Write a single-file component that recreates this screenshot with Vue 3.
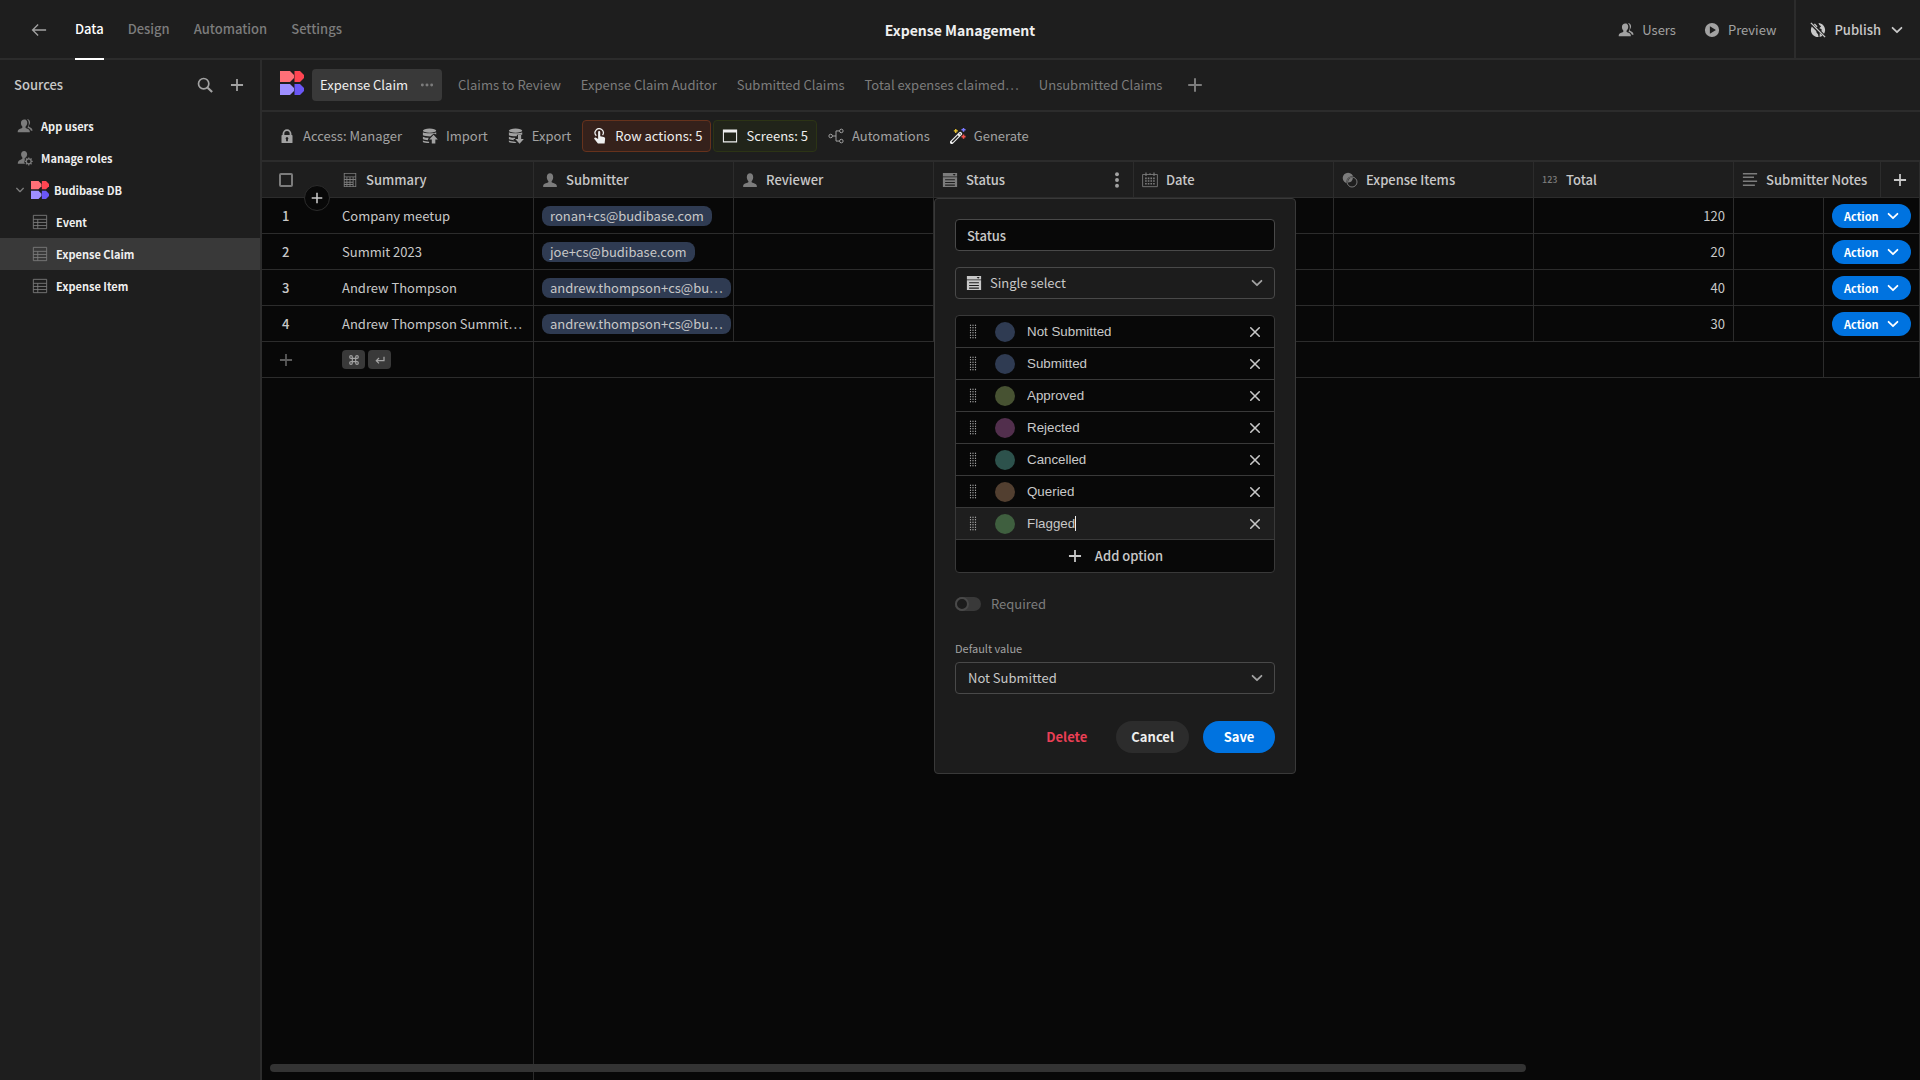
<script setup>
import { ref } from 'vue'

const icons = {
  back: '<path d="M17 9H2M8 2.800 1.800 9 8 15.200" fill="none" stroke="currentColor" stroke-width="1.5"/>',
  users: '<path d="M11.2 3.6C10.7 2 9.5 1.600 8.200 1.600c-2.200 0-3.800 1.500-3.800 4.100 0 1.600.7 3 1.500 4 .3.500.3 1.200-.2 1.500-1.200.7-4.900 1.300-4.900 4.100V16h13.600v-.8c0-2.800-3.400-3.300-4.500-4-.5-.4-.4-1.100-.1-1.600.9-1 1.700-2.300 1.700-4 0-.8-.1-1.400-.3-2z"/><path d="M11 1.100c2.200 0 3.700 1.400 3.700 3.800 0 1.500-.6 2.700-1.300 3.600-.4.500-.3 1.100.2 1.400 1 .7 3.800 1.400 3.800 3.900v.6h-1.700c-.6-1.700-2-2.700-3.900-3.600.8-1.200 1.500-2.900 1.500-5 0-2-.8-3.600-2.300-4.700z"/>',
  roles: '<path d="M9 15.500c-.3-.8-1-1.400-.9-2.300l.9-2.200-.6-.8c.2-.9 1-1.700 1.800-2 .7-.9 1.200-1.900 1.200-3.300C11.400 2.500 10 1 8 1S4.600 2.500 4.600 4.900c0 1.500.6 2.700 1.300 3.600.4.500.3 1.200-.2 1.500C4.500 10.800.9 11.500.9 15v.5z"/><circle cx="13.200" cy="12.800" r="2.700" fill="none" stroke="currentColor" stroke-width="1.400"/><path d="M13.200 8.300v1.900m0 5.300v1.900M8.700 12.800h1.900m5.200 0h1.900M10 9.600l1.300 1.300m3.800 3.800 1.300 1.300m0-6.400-1.300 1.300m-3.800 3.800L10 16" stroke="currentColor" stroke-width="1.400"/>',
  user: '<path d="M11.300 11.700c-.6-.3-.7-1.200-.3-1.700 1-1.100 1.600-2.500 1.600-4.200C12.600 3 11.100 1.400 9 1.400S5.400 3 5.400 5.800c0 1.700.7 3.100 1.600 4.200.5.500.3 1.400-.3 1.700-1.500.8-5.400 1.200-5.400 4V17h15.400v-1.300c0-2.700-3.900-3.200-5.400-4z"/>',
  search: '<circle cx="7.500" cy="7.500" r="5.800" fill="none" stroke="currentColor" stroke-width="1.900"/><path d="m12 12 5 5" stroke="currentColor" stroke-width="2.400"/>',
  plus: '<path d="M9 2.200v13.600M2.200 9h13.600" stroke="currentColor" stroke-width="2"/>',
  chevron: '<path d="m4 6.500 5 5 5-5" fill="none" stroke="currentColor" stroke-width="2" stroke-linecap="round" stroke-linejoin="round"/>',
  cross: '<path d="m3.500 3.500 11 11m0-11-11 11" stroke="currentColor" stroke-width="2" stroke-linecap="round"/>',
  table: '<path d="M1.500 1.500h15v15h-15zM1.500 6h15M1.500 9.500h15M1.500 13h15M6.500 6v10.500" fill="none" stroke="currentColor" stroke-width="1"/>',
  play: '<path fill-rule="evenodd" d="M9 1a8 8 0 1 1 0 16A8 8 0 0 1 9 1zm-2.400 3.800v8.400L13.400 9z"/>',
  globe: '<path d="M9.500 1c4.300.2 7.500 3.600 7.500 8 0 1.600-.5 3.100-1.300 4.300L12.800 10c.7-.9.300-2-.8-2.300l-1.500-.8 2-2-2-1.600zM5.500 1.800l3 3-1 1L4.300 2.600zM2 5l5 5 .5 2.200 1.500 1.600.7 3.100C5 17.300 1 13.600 1 9c0-1.500.4-2.900 1-4zm9 7.500 3 3c-1 .8-2 1.200-3.200 1.400z"/><path d="m1 1 16 16" stroke="currentColor" stroke-width="1.500"/>',
  lock: '<path fill-rule="evenodd" d="M14.500 8H14V6.500a5 5 0 0 0-10 0V8h-.5a.7.7 0 0 0-.7.700v7.600c0 .4.300.7.700.7h11c.4 0 .7-.3.7-.7V8.700a.7.7 0 0 0-.7-.7zM6 6.500a3 3 0 0 1 6 0V8H6zm4 6.300V15H8v-2.200a1.500 1.500 0 1 1 2 0z"/>',
  import: '<ellipse cx="8.500" cy="3" rx="7.500" ry="2.300"/><path d="M1 4.800c2 1.600 13 1.600 15 0v2.500l-2.700-1-4 3.200C6 9.500 2.500 9 1 8.200zM1 9.800c2 1 4.500 1.300 6.500 1.300l-1 2.700C4.500 13.700 2 13.200 1 12.500zM1 14.200c1.500.8 4 1.200 7 1.200V17c-3.500 0-6-.5-7-1.300zM13 7.500l4.800 5.300H15V17.500h-4v-4.700H8.200z"/>',
  export: '<ellipse cx="8.500" cy="3" rx="7.500" ry="2.300"/><path d="M1 4.800c2 1.600 13 1.600 15 0v2.700H10v1.800C6 9.500 2.500 9 1 8.200zM1 9.800c2 1 4.500 1.300 7 1.300v1.300H6l1 1.500C4.500 13.700 2 13.200 1 12.500zM1 14.200c1.500.8 4 1.200 7 1.200l1.600 1.600c-4 0-7.600-.5-8.600-1.300zM11.200 8h3.600v4.500h3L13 17.800l-4.800-5.300h3z"/>',
  touch: '<path d="M6 8.700A4.600 4.600 0 1 1 13 8" fill="none" stroke="currentColor" stroke-width="1.400"/><path d="M8 4.700c0-1.600 2.400-1.600 2.400 0v4.500l4 .9c1 .3 1.600 1 1.500 2l-.6 5.400H7.800l-4-5.200c-.8-1.200.7-2.300 1.800-1.400L8 12.500z"/>',
  screen: '<path fill-rule="evenodd" d="M1 1.800h16v14.400H1zM2.200 5v10h13.600V5z"/>',
  flow: '<circle cx="3" cy="9" r="2" fill="none" stroke="currentColor" stroke-width="1.100"/><circle cx="15" cy="3.300" r="2" fill="none" stroke="currentColor" stroke-width="1.100"/><circle cx="15" cy="14.700" r="2" fill="none" stroke="currentColor" stroke-width="1.100"/><path d="M5 9h4m4-5.700H9v11.400h4" fill="none" stroke="currentColor" stroke-width="1.100"/>',
  wand: '<path d="m2 16 9.500-9.500" stroke="#efefef" stroke-width="4.200" stroke-linecap="round"/><path d="m2.300 15.700 7-7M11 7l.7-.7" stroke="#1e1e1e" stroke-width="1.600"/><path d="M6.500 1v4.500M4.300 3.200h4.500" stroke="#f0c930" stroke-width="1.500"/><path d="M15.200-.3v4.600M12.900 2h4.600" stroke="#7a78ff" stroke-width="1.700"/><path d="M15.200 7.400V12M12.900 9.700h4.600" stroke="#f4514a" stroke-width="1.700"/>',
  calc: '<path fill-rule="evenodd" d="M2 1h14v16H2zM3 2v3h12V2zm0 4v2h2V6zm3 0v2h2.500V6zm3.500 0v2H12V6zM13 6v2h2V6zM3 9v2h2V9zm3 0v2h2.500V9zm3.500 0v2H12V9zM13 9v7h2V9zM3 12v1.500h2V12zm3 0v1.500h2.500V12zm3.500 0v1.500H12V12zM3 14.500V16h2v-1.500zm3 0V16h2.500v-1.500zm3.500 0V16H12v-1.500z"/>',
  select: '<path fill-rule="evenodd" d="M1 1h16v4H1zm11 1.200 1.700 1.900 1.700-1.900zM1 6h16v11H1zm2.500 2.200v1.200h11V8.200zm0 3v1.200h11v-1.200zm0 3v1.200h11v-1.200z"/>',
  calendar: '<path d="M.7 2.800h16.600v13.700H.7z" fill="none" stroke="currentColor" stroke-width="1"/><path d="M4.500.500v4M13.500.500v4M9 1.500v2" stroke="currentColor" stroke-width="1.300"/><path d="M3.500 7.200h11.500M3.500 10.200h11.500M3.500 13.200h11.500" stroke="currentColor" stroke-width="1.800" stroke-dasharray="1.800 1.200"/>',
  link: '<circle cx="6.800" cy="6.800" r="6"/><circle cx="11.300" cy="11.300" r="6.400" fill="#1e1e1e"/><circle cx="11.300" cy="11.300" r="5.600" fill="none" stroke="currentColor" stroke-width="1.100"/><path d="M6.800 11.800c-.3-3 2-5.400 5.300-5.300.2 3-2 5.500-5.300 5.300z"/>',
  text: '<path d="M1 2h16M1 6h12.500M1 10.500h16M1 15h13.500" stroke="currentColor" stroke-width="1.600"/>',
  enter: '<path d="M15 4v6H4M7.500 6 3.500 10l4 4" fill="none" stroke="currentColor" stroke-width="1.900"/>',
  command: '<path d="M6.500 6.500h5v5h-5zM6.500 6.500h-2a2 2 0 1 1 2-2zM11.500 6.500v-2a2 2 0 1 1 2 2zM11.500 11.500h2a2 2 0 1 1-2 2zM6.500 11.500v2a2 2 0 1 1-2-2z" fill="none" stroke="currentColor" stroke-width="1.700"/>',
  grip: '<path d="M6.200.800v17M9 .8v17M11.800.800v17" stroke="currentColor" stroke-width="1.300" stroke-dasharray="1.300 1.500"/>',
  dots: '<circle cx="3" cy="9" r="1.900"/><circle cx="9" cy="9" r="1.900"/><circle cx="15" cy="9" r="1.900"/>',
  more: '<circle cx="9" cy="2.500" r="2.200"/><circle cx="9" cy="9" r="2.200"/><circle cx="9" cy="15.500" r="2.200"/>',
}

const tabs = ['Data', 'Design', 'Automation', 'Settings']
const views = ['Claims to Review', 'Expense Claim Auditor', 'Submitted Claims', 'Total expenses claimed…', 'Unsubmitted Claims']
const tools = [
  { icon: 'lock', label: 'Access: Manager' },
  { icon: 'import', label: 'Import' },
  { icon: 'export', label: 'Export' },
  { icon: 'touch', label: 'Row actions: 5', tone: 'orange' },
  { icon: 'screen', label: 'Screens: 5', tone: 'green' },
  { icon: 'flow', label: 'Automations' },
  { icon: 'wand', label: 'Generate' },
]
const tables = ['Event', 'Expense Claim', 'Expense Item']
const rows = [
  { summary: 'Company meetup', submitter: 'ronan+cs@budibase.com', total: 120 },
  { summary: 'Summit 2023', submitter: 'joe+cs@budibase.com', total: 20 },
  { summary: 'Andrew Thompson', submitter: 'andrew.thompson+cs@bu…', total: 40 },
  { summary: 'Andrew Thompson Summit…', submitter: 'andrew.thompson+cs@bu…', total: 30 },
]
const fieldName = ref('Status')
const options = ref([
  { name: 'Not Submitted', color: '#2f3b52' },
  { name: 'Submitted', color: '#2f3b52' },
  { name: 'Approved', color: '#475232' },
  { name: 'Rejected', color: '#522f4d' },
  { name: 'Cancelled', color: '#2d524c' },
  { name: 'Queried', color: '#523f30' },
  { name: 'Flagged', color: '#3f5f3f', active: true },
])
</script>

<template>
  <div class="app">
    <header class="topbar">
      <nav class="nav">
        <button class="plain back" aria-label="Back"><svg class="icon" viewBox="0 0 18 18" v-html="icons.back" /></button>
        <a v-for="(t, i) in tabs" :key="t" href="#" class="nav-link" :class="{ current: i === 0 }">{{ t }}</a>
      </nav>
      <h1>Expense Management</h1>
      <div class="top-actions">
        <button class="plain top-btn"><svg class="icon" viewBox="0 0 18 18" v-html="icons.users" />Users</button>
        <button class="plain top-btn"><svg class="icon" viewBox="0 0 18 18" v-html="icons.play" />Preview</button>
        <button class="plain top-btn publish"><svg class="icon" viewBox="0 0 18 18" v-html="icons.globe" />Publish<svg class="icon" viewBox="0 0 18 18" v-html="icons.chevron" /></button>
      </div>
    </header>

    <div class="body">
      <aside class="sidebar">
        <div class="side-head">
          <span>Sources</span>
          <button class="plain" aria-label="Search"><svg class="icon" viewBox="0 0 18 18" v-html="icons.search" /></button>
          <button class="plain" aria-label="Add source"><svg class="icon" viewBox="0 0 18 18" v-html="icons.plus" /></button>
        </div>
        <a href="#" class="side-item"><svg class="icon" viewBox="0 0 18 18" v-html="icons.users" />App users</a>
        <a href="#" class="side-item"><svg class="icon" viewBox="0 0 18 18" v-html="icons.roles" />Manage roles</a>
        <a href="#" class="side-item db">
          <svg class="icon i12" viewBox="0 0 18 18" v-html="icons.chevron" />
          <svg class="logo small" viewBox="0 0 24 24">
            <path fill="#ff7078" d="M0 0h10l4 4v3l-4 4H0z" /><path fill="#ff4552" d="M14.500 0H20l4 4v3l-4 4h-5.500z" />
            <path fill="#9e8fff" d="M0 13h10l4 4v3l-4 4H0z" /><path fill="#6a57f6" d="M14.500 13H20l4 4v3l-4 4h-5.500z" />
          </svg>Budibase DB</a>
        <a v-for="(t, i) in tables" :key="t" href="#" class="side-item sub" :class="{ current: i === 1 }"><svg class="icon" viewBox="0 0 18 18" v-html="icons.table" />{{ t }}</a>
      </aside>

      <main class="main">
        <nav class="views">
          <svg class="logo" viewBox="0 0 24 24">
            <path fill="#ff7078" d="M0 0h10l4 4v3l-4 4H0z" /><path fill="#ff4552" d="M14.500 0H20l4 4v3l-4 4h-5.500z" />
            <path fill="#9e8fff" d="M0 13h10l4 4v3l-4 4H0z" /><path fill="#6a57f6" d="M14.500 13H20l4 4v3l-4 4h-5.500z" />
          </svg>
          <a href="#" class="view current">Expense Claim<svg class="icon" viewBox="0 0 18 18" v-html="icons.dots" /></a>
          <a v-for="v in views" :key="v" href="#" class="view">{{ v }}</a>
          <button class="plain add-view" aria-label="Add view"><svg class="icon i18" viewBox="0 0 18 18" v-html="icons.plus" /></button>
        </nav>
        <div class="toolbar">
          <button v-for="t in tools" :key="t.label" class="tool" :class="t.tone"><svg class="icon" viewBox="0 0 18 18" v-html="icons[t.icon]" />{{ t.label }}</button>
        </div>

        <section class="grid">
          <table>
            <colgroup>
              <col class="c-gutter"><col v-for="n in 7" :key="n" class="c-data"><col><col class="c-action"><col class="c-add">
            </colgroup>
            <thead>
              <tr>
                <th class="gutter">
                  <input class="check" type="checkbox" aria-label="Select all rows">
                  <button class="insert" aria-label="Insert row"><svg class="icon" viewBox="0 0 18 18" v-html="icons.plus" /></button>
                </th>
                <th><div class="head"><svg class="icon" viewBox="0 0 18 18" v-html="icons.calc" />Summary</div></th>
                <th><div class="head"><svg class="icon" viewBox="0 0 18 18" v-html="icons.user" />Submitter</div></th>
                <th><div class="head"><svg class="icon" viewBox="0 0 18 18" v-html="icons.user" />Reviewer</div></th>
                <th class="anchor">
                  <div class="head"><svg class="icon" viewBox="0 0 18 18" v-html="icons.select" />Status
                    <button class="plain more" aria-label="Column menu"><svg class="icon" viewBox="0 0 18 18" v-html="icons.more" /></button>
                  </div>
                  <form class="popover" @submit.prevent>
                    <input v-model="fieldName" class="field name" aria-label="Column name">
                    <div class="picker">
                      <svg class="icon lead" viewBox="0 0 18 18" v-html="icons.select" />
                      <select class="field with-icon" aria-label="Column type"><option>Single select</option></select>
                      <svg class="icon caret" viewBox="0 0 18 18" v-html="icons.chevron" />
                    </div>
                    <div class="options">
                      <div v-for="(o, i) in options" :key="i" class="option" :class="{ active: o.active }">
                        <svg class="icon grip" viewBox="0 0 18 18" v-html="icons.grip" />
                        <span class="swatch" :style="{ background: o.color }" />
                        <div class="option-name"><input v-model="o.name" aria-label="Option name"><span v-if="o.active" class="cursor" /></div>
                        <button type="button" class="plain" aria-label="Remove option"><svg class="icon i14" viewBox="0 0 18 18" v-html="icons.cross" /></button>
                      </div>
                      <button type="button" class="plain add-option"><svg class="icon" viewBox="0 0 18 18" v-html="icons.plus" />Add option</button>
                    </div>
                    <label class="switch"><input type="checkbox">Required</label>
                    <label class="label" for="default-value">Default value</label>
                    <div class="picker">
                      <select id="default-value" class="field"><option>Not Submitted</option></select>
                      <svg class="icon caret" viewBox="0 0 18 18" v-html="icons.chevron" />
                    </div>
                    <div class="buttons">
                      <button type="button" class="btn delete">Delete</button>
                      <button type="button" class="btn cancel">Cancel</button>
                      <button class="btn save">Save</button>
                    </div>
                  </form>
                </th>
                <th><div class="head"><svg class="icon" viewBox="0 0 18 18" v-html="icons.calendar" />Date</div></th>
                <th><div class="head"><svg class="icon" viewBox="0 0 18 18" v-html="icons.link" />Expense Items</div></th>
                <th><div class="head"><span class="num-icon">123</span>Total</div></th>
                <th colspan="2"><div class="head"><svg class="icon" viewBox="0 0 18 18" v-html="icons.text" />Submitter Notes</div></th>
                <th class="add-col"><button class="plain" aria-label="Add column"><svg class="icon" viewBox="0 0 18 18" v-html="icons.plus" /></button></th>
              </tr>
            </thead>
            <tbody>
              <tr v-for="(r, i) in rows" :key="i">
                <td class="gutter">{{ i + 1 }}</td>
                <td>{{ r.summary }}</td>
                <td><span class="pill">{{ r.submitter }}</span></td>
                <td /><td /><td /><td />
                <td class="number">{{ r.total }}</td>
                <td />
                <td colspan="2"><button class="action">Action<svg class="icon" viewBox="0 0 18 18" v-html="icons.chevron" /></button></td>
              </tr>
              <tr class="new-row">
                <td class="gutter"><button class="plain" aria-label="New row"><svg class="icon" viewBox="0 0 18 18" v-html="icons.plus" /></button></td>
                <td>
                  <div class="keys">
                    <kbd><svg class="icon i12" viewBox="0 0 18 18" v-html="icons.command" /></kbd>
                    <kbd><svg class="icon i12" viewBox="0 0 18 18" v-html="icons.enter" /></kbd>
                  </div>
                </td>
                <td colspan="7" />
                <td colspan="2" />
              </tr>
            </tbody>
          </table>
          <div class="sticky-rest" />
          <div class="scroll"><div class="thumb" /></div>
        </section>
      </main>
    </div>
  </div>
</template>

<style>
body {
  margin: 0;
  background: #080808;
}
</style>

<style scoped>
.app {
  --line: #2c2c2c;
  display: flex;
  flex-direction: column;
  min-height: 100vh;
  color: #c8c8c8;
  background: #1e1e1e;
  font: 13px/20px "Noto Sans CJK SC", "Source Sans Pro", "Open Sans", sans-serif;
}
.app *,
.app *::before {
  box-sizing: border-box;
}
a {
  color: inherit;
  text-decoration: none;
}
button,
select,
.field {
  font: inherit;
  color: inherit;
}
button {
  cursor: pointer;
}
.plain {
  display: flex;
  align-items: center;
  padding: 0;
  border: 0;
  background: none;
}
.icon {
  flex: none;
  width: 16px;
  height: 16px;
  fill: currentColor;
}
.i18 { width: 18px; height: 18px; }
.i14 { width: 14px; height: 14px; }
.i12 { width: 12px; height: 12px; }
.logo {
  flex: none;
  width: 24px;
  height: 24px;
}
.logo.small { width: 18px; height: 18px; }

/* Top bar */
.topbar {
  display: grid;
  grid-template-columns: 1fr auto 1fr;
  height: 60px;
  border-bottom: 2px solid var(--line);
}
.nav {
  display: flex;
  gap: 24px;
  padding-left: 31px;
  font-weight: 500;
}
.back { margin-right: 4px; color: #a2a2a2; }
.nav-link {
  display: flex;
  align-items: center;
  height: 60px;
  border-bottom: 2px solid transparent;
  color: #7c7c7c;
}
.nav-link.current {
  color: #fff;
  border-color: #fff;
}
h1 {
  margin: 0;
  align-self: center;
  font-size: 14px;
  font-weight: 700;
  color: #efefef;
}
.top-actions {
  display: flex;
  justify-content: flex-end;
}
.top-btn {
  gap: 8px;
  margin-right: 28px;
  color: #a2a2a2;
}
.top-btn:nth-child(2) { margin-right: 18px; }
.top-btn.publish {
  margin: 0;
  padding: 0 15px 0 14px;
  border-left: 2px solid var(--line);
  font-weight: 500;
  color: #c8c8c8;
}

/* Sidebar */
.body {
  flex: 1;
  display: flex;
}
.sidebar {
  flex: none;
  width: 262px;
  border-right: 2px solid var(--line);
}
.side-head {
  display: flex;
  align-items: center;
  gap: 16px;
  height: 50px;
  padding: 0 15px 0 14px;
  font-weight: 500;
}
.side-head span { flex: 1; }
.side-head .plain { color: #a2a2a2; }
.side-item {
  display: flex;
  align-items: center;
  gap: 8px;
  height: 32px;
  padding-left: 17px;
  font-size: 11px;
  font-weight: 700;
  color: #efefef;
}
.side-item .icon { color: #7c7c7c; }
.side-item.db { gap: 5px; padding-left: 14px; }
.side-item.sub { padding-left: 32px; }
.side-item.current { background: #393939; }

/* Views and toolbar */
.main {
  flex: 1;
  min-width: 0;
  display: flex;
  flex-direction: column;
}
.views,
.toolbar {
  display: flex;
  align-items: center;
  border-bottom: 2px solid var(--line);
}
.views {
  gap: 4px;
  height: 52px;
  padding-left: 18px;
  color: #7c7c7c;
}
.views .logo { margin: 0 4px 4px 0; }
.view {
  display: flex;
  align-items: center;
  gap: 12px;
  height: 32px;
  padding: 0 8px;
  border-radius: 4px;
}
.view.current {
  margin-right: 4px;
  background: #393939;
  color: #efefef;
}
.view.current .icon { width: 14px; color: #7c7c7c; }
.add-view { margin-left: 12px; }
.toolbar {
  gap: 2px;
  height: 50px;
  padding-left: 8px;
}
.tool {
  display: flex;
  align-items: center;
  gap: 8px;
  height: 32px;
  padding: 0 8px;
  border: 1px solid transparent;
  border-radius: 4px;
  background: none;
  color: #a2a2a2;
}
.tool.orange { background: #35211b; border-color: #66321c; color: #efefef; }
.tool.green { background: #21241a; border-color: #2c3415; color: #efefef; }

/* Data grid */
.grid {
  position: relative;
  flex: 1;
  display: flex;
  flex-direction: column;
  background: #080808;
}
table {
  width: 100%;
  table-layout: fixed;
  border-spacing: 0;
}
.c-gutter { width: 72px; }
.c-data { width: 200px; }
.c-action { width: 57px; }
.c-add { width: 39px; }
th,
td {
  height: 36px;
  padding: 0 8px;
  border-right: 1px solid var(--line);
  border-bottom: 1px solid var(--line);
  font-weight: 400;
  text-align: left;
  white-space: nowrap;
}
th {
  background: #1e1e1e;
  font-weight: 500;
}
.gutter {
  position: relative;
  padding-left: 17px;
  border-right: 0;
}
td.gutter { padding-left: 20px; font-weight: 500; }
.head {
  display: flex;
  align-items: center;
  gap: 8px;
}
.head > .icon { color: #7c7c7c; }
.num-icon {
  width: 16px;
  font-size: 9px;
  color: #7c7c7c;
}
.head > .more { margin-left: auto; color: #a2a2a2; }
.check {
  appearance: none;
  display: block;
  width: 14px;
  height: 14px;
  margin: 0;
  border: 2px solid #7c7c7c;
  border-radius: 2px;
}
.insert {
  position: absolute;
  z-index: 1;
  top: 23px;
  left: 42px;
  display: flex;
  align-items: center;
  justify-content: center;
  width: 26px;
  height: 26px;
  padding: 0;
  border: 1px solid #2c2c2c;
  border-radius: 50%;
  background: #080808;
}
.insert .icon { width: 14px; height: 14px; }
.add-col { padding: 0 11px; }
.pill {
  display: block;
  width: fit-content;
  padding: 0 8px;
  border-radius: 8px;
  background: #2f3b52;
}
.number { text-align: right; }
.action {
  display: flex;
  align-items: center;
  justify-content: space-between;
  width: 79px;
  height: 24px;
  padding: 0 10px 0 12px;
  border: 0;
  border-radius: 12px;
  background: #0073e0;
  color: #fff;
  font-size: 11px;
  font-weight: 700;
}
.new-row .plain { color: #5c5c5c; }
.new-row .gutter { padding-left: 16px; }
.keys { display: flex; gap: 3px; }
kbd {
  display: flex;
  align-items: center;
  justify-content: center;
  width: 23px;
  height: 19px;
  border-radius: 4px;
  background: #393939;
  color: #a2a2a2;
}
.sticky-rest {
  flex: 1;
  width: 272px;
  border-right: 1px solid var(--line);
}
.scroll {
  position: absolute;
  right: 8px;
  bottom: 8px;
  left: 8px;
}
.thumb {
  width: 76.5%;
  height: 8px;
  border-radius: 4px;
  background: #333;
}

/* Column editor */
.anchor { position: relative; }
.popover {
  position: absolute;
  z-index: 2;
  top: 100%;
  left: 0;
  width: 362px;
  margin-top: 1px;
  padding: 20px;
  border: 1px solid #393939;
  border-radius: 4px;
  background: #1c1c1c;
  font-weight: 400;
}
.field {
  display: block;
  width: 100%;
  height: 32px;
  padding: 0 12px;
  border: 1px solid #494949;
  border-radius: 4px;
  background: #1c1c1c;
  appearance: none;
  outline: 0;
}
.field.name {
  margin-bottom: 16px;
  padding: 0 11px;
  background: #080808;
  font-weight: 500;
}
.picker { position: relative; }
.picker .icon {
  position: absolute;
  top: 8px;
  pointer-events: none;
}
.lead { left: 11px; }
.picker .caret { right: 10px; color: #a2a2a2; }
.field.with-icon { padding-left: 34px; }
.options {
  margin: 16px 0 23px;
  border: 1px solid #393939;
  border-radius: 4px;
  background: #080808;
  overflow: hidden;
}
.option {
  display: flex;
  align-items: center;
  height: 32px;
  padding: 0 12px 0 9px;
  border-bottom: 1px solid #393939;
}
.option.active { background: #1e1e1e; }
.swatch {
  flex: none;
  width: 20px;
  height: 20px;
  margin: 0 12px 0 14px;
  border-radius: 50%;
}
.option-name {
  flex: 1;
  display: flex;
  align-items: center;
}
.option-name input {
  field-sizing: content;
  padding: 0;
  border: 0;
  outline: 0;
  background: none;
  color: inherit;
  font-family: "Liberation Sans", Arial, sans-serif;
}
.cursor {
  width: 1px;
  height: 15px;
  background: #efefef;
}
.add-option {
  justify-content: center;
  gap: 12px;
  width: 100%;
  height: 32px;
  font-weight: 500;
}
.switch {
  display: flex;
  align-items: center;
  gap: 10px;
  height: 16px;
  color: #7c7c7c;
}
.switch input {
  appearance: none;
  display: block;
  width: 26px;
  height: 14px;
  margin: 0;
  border-radius: 7px;
  background: #393939;
}
.switch input::before {
  content: "";
  display: block;
  width: 14px;
  height: 14px;
  border: 2px solid #494949;
  border-radius: 50%;
  background: #1c1c1c;
}
.label {
  display: block;
  margin: 26px 0 4px;
  font-size: 11px;
  color: #a2a2a2;
}
.buttons {
  display: flex;
  justify-content: flex-end;
  gap: 14px;
  margin-top: 27px;
}
.btn {
  height: 32px;
  padding: 0 15px;
  border: 0;
  border-radius: 16px;
  background: none;
  font-weight: 700;
}
.delete { color: #ea3f55; }
.cancel { background: #2c2c2c; color: #efefef; }
.save { min-width: 72px; background: #0073e0; color: #fff; }
</style>
